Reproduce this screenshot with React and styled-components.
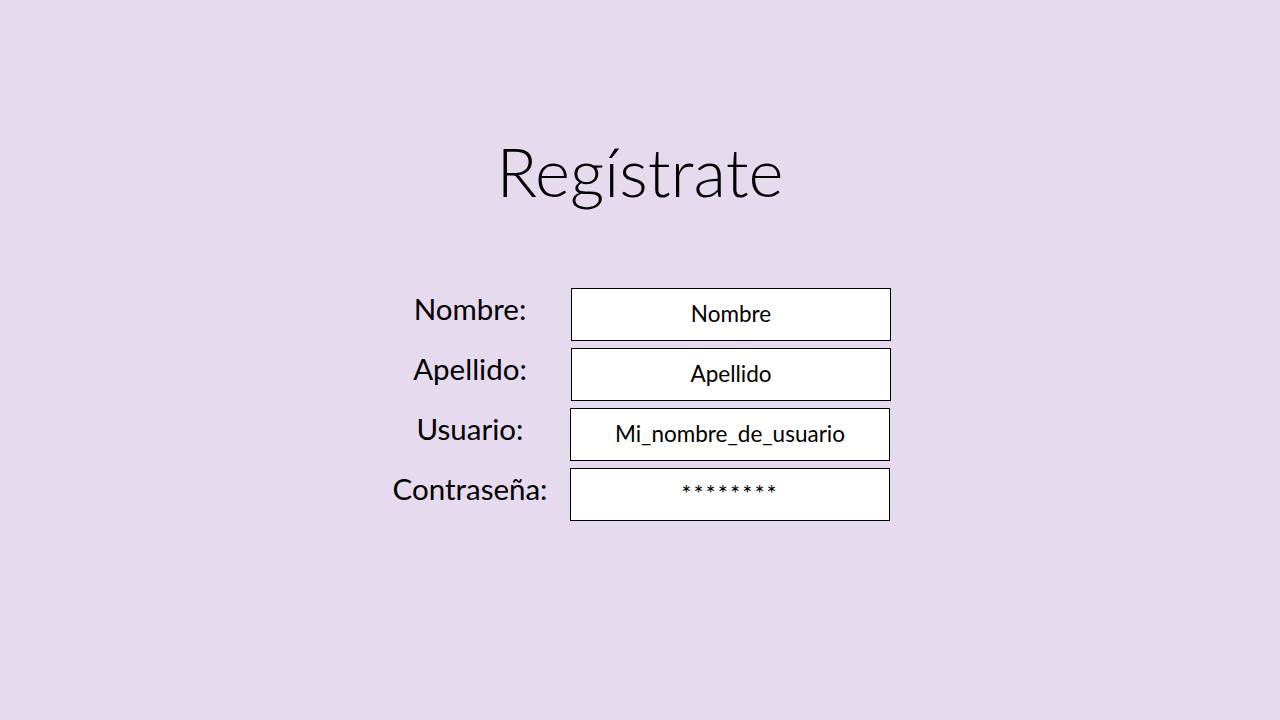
import React from 'react';
import styled, { createGlobalStyle } from 'styled-components';

const GlobalStyle = createGlobalStyle`
  html, body {
    margin: 0;
    padding: 0;
    background: #e5daee;
  }
  body {
    font-family: Lato, "Open Sans", sans-serif;
    color: #000;
  }
`;

const Page = styled.div`
  width: 1280px;
  height: 720px;
  background: #e5daee;
  display: flex;
  flex-direction: column;
  align-items: center;
  padding-top: 128px;
  box-sizing: border-box;
`;

const Title = styled.h1`
  margin: 0;
  font-family: Lato, sans-serif;
  font-weight: 300;
  font-size: 67px;
  line-height: 86px;
`;

const Form = styled.div`
  margin-top: 74px;
  width: 520px;
  padding-right: 9px;
  box-sizing: border-box;
  display: grid;
  grid-template-columns: 180px 320px;
  column-gap: 11px;
  row-gap: 7px;
`;

const Label = styled.div`
  font-family: Lato, sans-serif;
  font-size: 29.5px;
  text-align: center;
  line-height: 42px;
`;

const Field = styled.div`
  height: 53px;
  box-sizing: border-box;
  border: 1px solid #000;
  background: #fff;
  display: flex;
  justify-content: center;
  align-items: ${p => (p.$top ? 'flex-start' : 'center')};
  padding-top: ${p => (p.$top ? '12px' : '0')};
  font-family: Lato, sans-serif;
  font-size: ${p => (p.$top ? '24px' : '22.5px')};
  letter-spacing: ${p => (p.$top ? '2px' : '0')};
  line-height: 1;
  margin-left: ${p => (p.$shift ? '-1px' : '0')};
  margin-right: ${p => (p.$shift ? '1px' : '0')};
`;

const rows = [
  { label: 'Nombre:', value: 'Nombre' },
  { label: 'Apellido:', value: 'Apellido' },
  { label: 'Usuario:', value: 'Mi_nombre_de_usuario', shift: true },
  { label: 'Contraseña:', value: '********', shift: true, top: true },
];

export default function App() {
  return (
    <>
      <GlobalStyle />
      <Page>
        <Title>Regístrate</Title>
        <Form>
          {rows.map(r => (
            <React.Fragment key={r.label}>
              <Label>{r.label}</Label>
              <Field $shift={r.shift} $top={r.top}>{r.value}</Field>
            </React.Fragment>
          ))}
        </Form>
      </Page>
    </>
  );
}
